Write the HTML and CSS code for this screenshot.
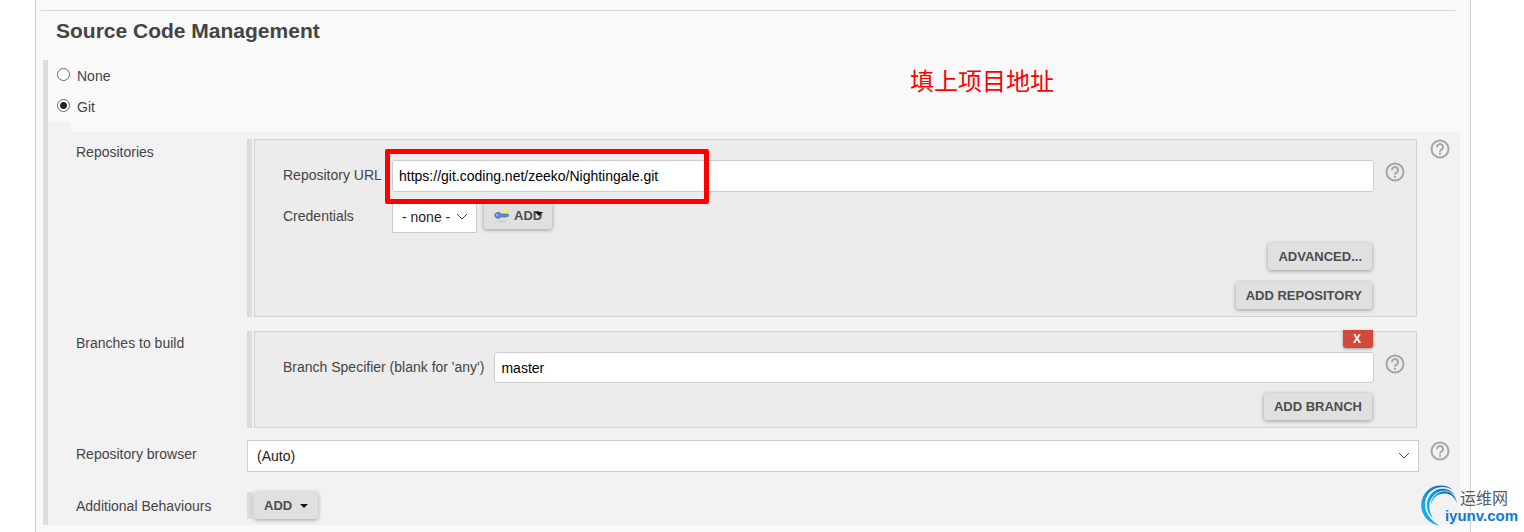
FILE: index.html
```html
<!DOCTYPE html>
<html lang="en">
<head>
<meta charset="utf-8">
<title>Source Code Management</title>
<link rel="stylesheet" href="styles.css">
</head>
<body>
<svg class="defs" aria-hidden="true">
  <symbol id="help" viewBox="0 0 20 20">
    <circle cx="10" cy="10" r="8.5" fill="none" stroke="currentColor" stroke-width="2"/>
    <path d="M7 8.200a3 3 0 1 1 4.800 2.200C10.600 11.200 10 11.600 10 12.800" fill="none" stroke="currentColor" stroke-width="2"/>
    <path d="M9 13.800h2v1.900H9z" fill="currentColor"/>
  </symbol>
</svg>
<main class="panel">
  <hr class="rule">
  <h2 class="title">Source Code Management</h2>
  <section class="scm">
    <label class="choice"><input type="radio" name="scm" class="radio">None</label>
    <label class="choice"><input type="radio" name="scm" class="radio" checked>Git</label>
    <div class="tab"></div>
    <div class="settings">
      <div class="setting">
        <span class="name">Repositories</span>
        <div class="group">
          <div class="box">
            <div class="field">
              <label class="key" for="url">Repository URL</label>
              <div class="control marked"><input class="text" id="url" type="text" value="https://git.coding.net/zeeko/Nightingale.git"></div>
              <button class="help" type="button" aria-label="Help for repository URL"><svg><use href="#help"/></svg></button>
            </div>
            <div class="field credentials">
              <label class="key" for="cred">Credentials</label>
              <div class="picker"><select class="select" id="cred"><option>- none -</option></select><svg class="chevron" viewBox="0 0 12 7"><path d="M1 1l5 5 5-5"/></svg></div>
              <button class="button key-button" type="button">
                <svg class="key-icon" viewBox="0 0 16 15"><ellipse cx="8" cy="13.500" rx="5" ry="1" fill="#d0d0d0"/><path d="M4 4.500C2 4.500.8 5.700.8 7.300s1.200 3 3.200 3c1.600 0 2.600-.6 3.200-1.600h.8l.8.800 1-.8 1 .8.900-.8h2.300l.8-1.200-.8-1.400H7.300C6.700 5.200 5.600 4.500 4 4.500z" fill="#5b8ccb" stroke="#3f70ab" stroke-width=".7"/><circle cx="3" cy="7" r=".8" fill="#dce8f6"/><circle cx="11.800" cy="2.800" r="2.300" fill="#f6ea3a"/><circle cx="11.800" cy="2.800" r="1" fill="#fffbb8"/></svg>
                ADD<svg class="caret over" viewBox="0 0 8 4"><path d="M0 0h8L4 4z"/></svg>
              </button>
            </div>
            <div class="actions">
              <button class="button" type="button">ADVANCED...</button>
              <button class="button" type="button">ADD REPOSITORY</button>
            </div>
          </div>
        </div>
        <button class="help side" type="button" aria-label="Help for repositories"><svg><use href="#help"/></svg></button>
      </div>
      <div class="setting">
        <span class="name raised">Branches to build</span>
        <div class="group">
          <div class="box">
            <button class="remove" type="button">X</button>
            <div class="field">
              <label class="key wide" for="branch">Branch Specifier (blank for 'any')</label>
              <div class="control"><input class="text short" id="branch" type="text" value="master"></div>
              <button class="help" type="button" aria-label="Help for branch specifier"><svg><use href="#help"/></svg></button>
            </div>
            <div class="actions">
              <button class="button" type="button">ADD BRANCH</button>
            </div>
          </div>
        </div>
      </div>
      <div class="setting browser">
        <label class="name" for="browser">Repository browser</label>
        <div class="picker"><select class="select full" id="browser"><option>(Auto)</option></select><svg class="chevron" viewBox="0 0 12 7"><path d="M1 1l5 5 5-5"/></svg></div>
        <button class="help side" type="button" aria-label="Help for repository browser"><svg><use href="#help"/></svg></button>
      </div>
      <div class="setting behaviours">
        <span class="name">Additional Behaviours</span>
        <div class="group">
          <button class="button" type="button">ADD<svg class="caret" viewBox="0 0 8 4"><path d="M0 0h8L4 4z"/></svg></button>
        </div>
      </div>
    </div>
  </section>
</main>
<p class="note" lang="zh">填上项目地址</p>
<div class="brand">
  <svg class="swoosh" viewBox="0 0 38 42">
    <defs><linearGradient id="blue" x1="0" y1="0.500" x2="1" y2="0"><stop offset="0" stop-color="#12aef0"/><stop offset="1" stop-color="#0b4f9f"/></linearGradient></defs>
    <path d="M33 6C26 0 14 0 7 7-3 17-1 37 20 42 5 34 1 19 9 9 15 2 25 1 33 6z" fill="url(#blue)"/>
    <path d="M35 11C29 3 18 3 12 9 4 17 6 29 13 34 8 26 8 17 14 11c6-6 15-6 21 0z" fill="url(#blue)"/>
    <path d="M37 19C35 8 26 5 18 9c-5 3-7 7-7 11 3-5 6-8 11-10 7-2 12 2 15 9z" fill="url(#blue)"/>
    <path d="M11 20C13 13 19 9 25 10c5 1 9 4 11 8-4-5-8-7-13-6-5 0-9 3-12 8z" fill="#f3f3f3"/>
  </svg>
  <span class="brand-cn" lang="zh">运维网</span>
  <span class="brand-url">iyunv.com</span>
</div>
</body>
</html>
```
FILE: styles.css
```css
*, *::after { box-sizing: border-box; }
body {
  margin: 0;
  position: relative;
  background: #fff;
  color: #444;
  font: 14px/20px "Liberation Sans", "Noto Sans CJK SC", sans-serif;
}
button, input, select { margin: 0; font: inherit; }
.defs { position: absolute; width: 0; height: 0; }
.panel {
  min-height: 100vh;
  margin: 0 53px 0 35px;
  padding-top: 10px;
  border: solid #ccc;
  border-width: 0 1px;
  background: #f9f9f9;
}
.rule { height: 1px; margin: 0 15px 0 5px; border: 0; background: #d9d9d9; }
.title { margin: 8px 0 17px 20px; font-size: 21px; line-height: 24px; }
.scm { margin: 0 10px 0 7px; border-left: 5px solid #dedede; }
.choice { display: flex; align-items: center; gap: 7px; height: 31px; padding-left: 9px; }
.radio {
  appearance: none;
  width: 13px;
  height: 13px;
  margin-bottom: 3px;
  border: 1px solid #666;
  border-radius: 50%;
  background: #fff;
}
.radio:checked { background: radial-gradient(circle, #222 3px, #fff 4px); }
.tab { width: 23px; height: 10px; background: #f2f2f2; }
.settings {
  display: flex;
  flex-direction: column;
  padding: 7px 0 6px 28px;
  background: #f2f2f2;
}
.setting { display: grid; grid-template-columns: 171px 1fr 41px; margin-bottom: 14px; }
.name { padding-top: 3px; }
.name.raised { padding-top: 2px; }
.group { margin-right: 2px; padding-left: 2px; border-left: 5px solid #dcdcdc; }
.box {
  position: relative;
  padding: 20px 11px 7px 28px;
  border: 1px solid #d2d2d2;
  background: #ececec;
}
.field { display: flex; align-items: center; }
.key { width: 109px; padding-bottom: 2px; white-space: nowrap; }
.key.wide { width: auto; padding-right: 10px; }
.control { position: relative; flex: 1; }
.marked::after {
  content: "";
  position: absolute;
  left: -7px;
  top: -11px;
  z-index: 1;
  width: 324px;
  height: 55px;
  border: 5px solid #f00;
  border-radius: 2px;
  pointer-events: none;
}
.text {
  display: block;
  width: 100%;
  height: 32px;
  padding: 0 6px;
  border: 1px solid #ccc;
  border-radius: 3px;
  background: #fff;
  color: #000;
}
.text.short { height: 31px; }
.help { width: 20px; height: 20px; margin: 0 0 8px 11px; padding: 0; border: 0; background: none; color: #a6a6a6; }
.help svg { display: block; width: 20px; height: 20px; }
.help.side { margin: 0 0 0 11px; }
.credentials { margin-top: 9px; }
.picker { position: relative; }
.select {
  display: block;
  appearance: none;
  height: 32px;
  width: 85px;
  padding: 0 9px;
  border: 1px solid #ccc;
  border-radius: 0;
  background: #fff;
  color: #222;
}
.select.full { width: 100%; }
.chevron {
  position: absolute;
  right: 9px;
  top: 12px;
  width: 12px;
  height: 7px;
  fill: none;
  stroke: #444;
  pointer-events: none;
}
.button {
  position: relative;
  display: flex;
  align-items: center;
  height: 27px;
  padding: 0 10px;
  border: 0;
  border-radius: 3px;
  background: #e0e0e0;
  box-shadow: 0 1px 4px rgba(0, 0, 0, .35);
  color: #4d4d4d;
  font: bold 13px/27px "Liberation Sans", sans-serif;
}
.key-button { margin: 0 0 4px 7px; }
.key-icon { width: 16px; height: 15px; margin-right: 4px; }
.caret { width: 8px; height: 4px; margin-left: 8px; fill: #111; }
.caret.over { position: absolute; right: 9px; top: 10px; }
.actions { display: flex; flex-direction: column; align-items: flex-end; gap: 12px; margin: 10px 33px 0 0; }
.remove {
  position: absolute;
  top: -2px;
  right: 43px;
  width: 30px;
  height: 18px;
  padding: 0 2px 0 0;
  border: 0;
  border-radius: 0 0 3px 3px;
  background: #d24939;
  box-shadow: 0 1px 3px rgba(0, 0, 0, .35);
  color: #fff;
  font: bold 12px/18px "Liberation Sans", sans-serif;
}
.browser { margin: -2px 0 20px; }
.browser .name { padding-top: 4px; }
.browser .help { margin-top: 1px; }
.behaviours { margin: 0; }
.behaviours .name { padding-top: 4px; }
.note {
  position: absolute;
  left: 910px;
  top: 64px;
  margin: 0;
  color: #f00;
  font: 24px/32px "Noto Sans CJK SC", sans-serif;
}
.brand { position: absolute; right: 6px; bottom: 6px; width: 98px; height: 42px; }
.swoosh { position: absolute; left: 0; top: 0; width: 38px; height: 42px; }
.brand-cn {
  position: absolute;
  right: 10px;
  top: 3px;
  color: #555b66;
  font: 16px/20px "Noto Sans CJK SC", sans-serif;
}
.brand-url { position: absolute; right: 0; bottom: 1px; color: #0f7ad0; font-weight: bold; font-size: 15px; line-height: 18px; }
```
